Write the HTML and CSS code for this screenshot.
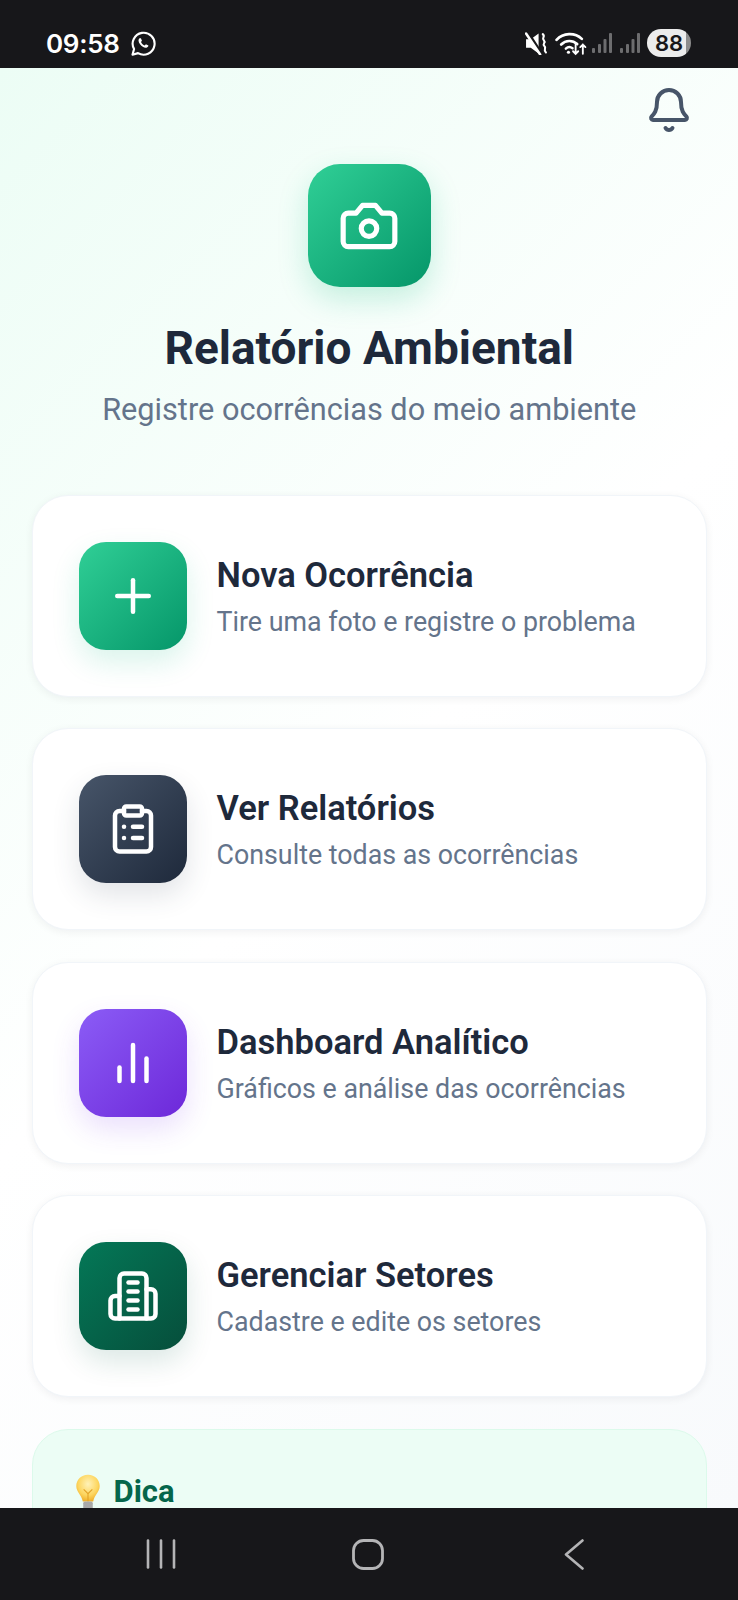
FILE: index.html
```html
<!DOCTYPE html>
<html lang="pt-BR">
<head>
<meta charset="utf-8">
<title>Relatório Ambiental</title>
<link rel="stylesheet" href="styles.css">
</head>
<body>
<div class="phone">
  <div class="status">
    <span class="time">09:58</span>
    <svg class="wa" viewBox="0 0 26 26" fill="none" stroke="#fff" stroke-width="2.2" stroke-linejoin="round" stroke-linecap="round"><path d="M1.6 24.6 3.2 18.8A11.4 11.4 0 1 1 7.3 23z"/><path d="M8.8 7.6c-1.6 1.4-1.2 3.8.6 6.2 2 2.6 4.6 4.1 6.7 3.6 1.2-.3 2-1.2 2-2.2l-2.6-1.3-1.2 1.2c-1.700-.6-3-1.900-3.900-3.700l1-1.200-1.100-2.700z" fill="#fff" stroke="none"/></svg>
    <span class="spacer"></span>
    <svg class="mute" viewBox="0 0 22 22" fill="none"><path d="M1 7h4.500l7.500-5.500v19L5.500 15H1z" fill="#fff"/><path d="M2 0l13 20" stroke="#17171a" stroke-width="3.600"/><path d="M1 1.500l13.500 20" stroke="#fff" stroke-width="2.400" stroke-linecap="round"/><path d="M17 2c3 2.500-1.500 3.500 1 6s-2 3 .500 5.500-1.500 3 1.500 6" stroke="#fff" stroke-width="2" stroke-linecap="round"/></svg>
    <svg class="wifi" viewBox="0 0 32 24" fill="none" stroke="#fff" stroke-linecap="round"><path d="M1.500 8.500C8 1.500 19 1 26 7.500" stroke-width="2.600"/><path d="M6 13c4.500-4.500 11-4.500 15.500-.5" stroke-width="2.600"/><path d="M10.500 17c2-2 4.500-2 6.500-.5" stroke-width="2.400"/><path d="M13 20.500h.1" stroke-width="3"/><path d="M20 13v9m-2.500-2.500L20 22l2.500-2.500" stroke-width="1.800"/><path d="M27 22v-9m-2.500 2.500L27 13l2.500 2.500" stroke-width="1.800"/></svg>
    <svg class="sig sig-first" viewBox="0 0 20 20" fill="#6d6d6f"><rect x="0" y="15" width="3" height="5" rx="1"/><rect x="6" y="11" width="3" height="9" rx="1"/><rect x="11.500" y="6" width="3" height="14" rx="1"/><rect x="17" y="0" width="3" height="20" rx="1"/></svg>
    <svg class="sig" viewBox="0 0 20 20" fill="#6d6d6f"><rect x="0" y="15" width="3" height="5" rx="1"/><rect x="6" y="11" width="3" height="9" rx="1"/><rect x="11.500" y="6" width="3" height="14" rx="1"/><rect x="17" y="0" width="3" height="20" rx="1"/></svg>
    <span class="batt">88</span>
  </div>

  <main class="content">
    <div class="topbar">
      <svg class="bell" viewBox="0 0 24 24" fill="none" stroke="#475569" stroke-width="2" stroke-linecap="round" stroke-linejoin="round"><path d="M10.268 21a2 2 0 0 0 3.464 0"/><path d="M3.262 15.326A1 1 0 0 0 4 17h16a1 1 0 0 0 .74-1.673C19.410 13.956 18 12.499 18 8A6 6 0 0 0 6 8c0 4.499-1.411 5.956-2.738 7.326"/></svg>
    </div>

    <header class="hero">
      <div class="logo">
        <svg class="logo-ico" viewBox="0 0 24 24" fill="none" stroke="#fff" stroke-width="2" stroke-linecap="round" stroke-linejoin="round"><path d="M14.500 4h-5L7 7H4a2 2 0 0 0-2 2v9a2 2 0 0 0 2 2h16a2 2 0 0 0 2-2V9a2 2 0 0 0-2-2h-3l-2.500-3z"/><circle cx="12" cy="13" r="3"/></svg>
      </div>
      <h1 class="title">Relatório Ambiental</h1>
      <p class="subtitle">Registre ocorrências do meio ambiente</p>
    </header>

    <section class="cards">
      <a class="card">
        <span class="tile tile-green">
          <svg class="ico" viewBox="0 0 24 24" fill="none" stroke="#fff" stroke-width="2" stroke-linecap="round" stroke-linejoin="round"><path d="M5 12h14"/><path d="M12 5v14"/></svg>
        </span>
        <span class="card-text"><span class="card-title">Nova Ocorrência</span><span class="card-sub">Tire uma foto e registre o problema</span></span>
      </a>
      <a class="card">
        <span class="tile tile-slate">
          <svg class="ico" viewBox="0 0 24 24" fill="none" stroke="#fff" stroke-width="2" stroke-linecap="round" stroke-linejoin="round"><rect x="8" y="2" width="8" height="4" rx="1"/><path d="M16 4h2a2 2 0 0 1 2 2v14a2 2 0 0 1-2 2H6a2 2 0 0 1-2-2V6a2 2 0 0 1 2-2h2"/><path d="M12 11h4"/><path d="M12 16h4"/><path d="M8 11h.01"/><path d="M8 16h.01"/></svg>
        </span>
        <span class="card-text"><span class="card-title">Ver Relatórios</span><span class="card-sub">Consulte todas as ocorrências</span></span>
      </a>
      <a class="card">
        <span class="tile tile-violet">
          <svg class="ico" viewBox="0 0 24 24" fill="none" stroke="#fff" stroke-width="2" stroke-linecap="round" stroke-linejoin="round"><path d="M18 20V10"/><path d="M12 20V4"/><path d="M6 20v-6"/></svg>
        </span>
        <span class="card-text"><span class="card-title">Dashboard Analítico</span><span class="card-sub">Gráficos e análise das ocorrências</span></span>
      </a>
      <a class="card">
        <span class="tile tile-forest">
          <svg class="ico" viewBox="0 0 24 24" fill="none" stroke="#fff" stroke-width="2" stroke-linecap="round" stroke-linejoin="round"><path d="M6 22V4a2 2 0 0 1 2-2h8a2 2 0 0 1 2 2v18Z"/><path d="M6 12H4a2 2 0 0 0-2 2v6a2 2 0 0 0 2 2h2"/><path d="M18 9h2a2 2 0 0 1 2 2v9a2 2 0 0 1-2 2h-2"/><path d="M10 6h4"/><path d="M10 10h4"/><path d="M10 14h4"/><path d="M10 18h4"/></svg>
        </span>
        <span class="card-text"><span class="card-title">Gerenciar Setores</span><span class="card-sub">Cadastre e edite os setores</span></span>
      </a>
    </section>

    <aside class="tip">
      <div class="tip-head">
        <svg class="bulb" viewBox="0 0 30 42"><defs><radialGradient id="bg" cx=".5" cy=".35" r=".7"><stop offset="0" stop-color="#fff2b8"/><stop offset=".6" stop-color="#fdd65f"/><stop offset="1" stop-color="#eda61f"/></radialGradient></defs><path d="M15 1C7 1 1.500 7 1.500 14c0 7 6 10 7.500 18h12c1.500-8 7.500-11 7.500-18C28.500 7 23 1 15 1z" fill="url(#bg)"/><path d="M10 18l5 5 5-5M15 23v9" stroke="#e3a327" stroke-width="1.300" fill="none"/><rect x="9.500" y="32" width="11" height="9" rx="2" fill="#a9a9a9"/></svg>
        <span class="tip-title">Dica</span>
      </div>
    </aside>
  </main>

  <nav class="nav">
    <svg class="nav-recent" viewBox="0 0 30 30" fill="none" stroke="#b4b4b6" stroke-width="2.600" stroke-linecap="round"><path d="M2 1.500v27"/><path d="M15 1.500v27"/><path d="M28 1.500v27"/></svg>
    <svg class="nav-home" viewBox="0 0 32 31" fill="none" stroke="#b4b4b6" stroke-width="2.800"><rect x="1.500" y="1.500" width="29" height="28" rx="10"/></svg>
    <svg class="nav-back" viewBox="0 0 20 31" fill="none" stroke="#b4b4b6" stroke-width="2.600" stroke-linecap="round" stroke-linejoin="round"><path d="M18.500 1.500 2 15.500l16.500 14"/></svg>
  </nav>
</div>
</body>
</html>
```
FILE: styles.css
```css
* { box-sizing: border-box; }
html, body { margin: 0; padding: 0; }
body { font-family: Roboto, "Liberation Sans", sans-serif; background: #17171a; }

.phone {
  width: 738px;
  height: 1600px;
  display: flex;
  flex-direction: column;
  overflow: hidden;
}

/* status bar */
.status {
  flex: 0 0 68px;
  background: #17171a;
  display: flex;
  align-items: center;
  padding: 18px 47px 0 46px;
  color: #fff;
}
.time { font-family: Inter, Roboto, sans-serif; font-weight: 600; font-size: 26px; letter-spacing: -0.3px; margin-right: 11px; }
.wa { width: 25px; height: 25px; }
.spacer { flex: 1; }
.mute { width: 23px; height: 23px; margin-right: 7px; }
.wifi { width: 33px; height: 25px; margin-right: 4px; }
.sig { width: 20px; height: 20px; margin-right: 7px; }
.sig-first { margin-right: 8px; }
.batt {
  width: 44px;
  height: 28px;
  border-radius: 14px;
  background: linear-gradient(90deg, #ececec 0 88%, #8d8d8d 88%);
  color: #17171a;
  font-family: Inter, Roboto, sans-serif;
  font-weight: 600;
  font-size: 22px;
  line-height: 28px;
  text-align: center;
}

/* scroll area */
.content {
  flex: 1 1 auto;
  min-height: 0;
  overflow: hidden;
  padding: 0 31px 0 31.5px;
  background: linear-gradient(135deg, #ecfdf5 0%, #ffffff 50%, #f8fafc 100%);
}
.topbar { display: flex; justify-content: flex-end; padding: 18px 14px 0 0; height: 96px; }
.bell { width: 48px; height: 48px; }

.hero { display: flex; flex-direction: column; align-items: center; }
.logo {
  width: 123px;
  height: 123px;
  border-radius: 32px;
  background: linear-gradient(135deg, #30cf96, #059669);
  box-shadow: 0 12px 30px rgba(16, 185, 129, .22);
  display: flex;
  align-items: center;
  justify-content: center;
}
.logo-ico { width: 62px; height: 62px; }
.title {
  margin: 34px 0 0;
  font-size: 46px;
  line-height: 54px;
  font-weight: 700;
  color: #1e293b;
}
.subtitle {
  margin: 16px 0 0;
  font-size: 30.7px;
  line-height: 38px;
  color: #64748b;
}

.cards { margin-top: 66px; display: flex; flex-direction: column; gap: 31.4px; }
.card {
  height: 202px;
  display: flex;
  align-items: center;
  gap: 30px;
  padding: 0 46px;
  background: #fff;
  border: 1px solid #f1f5f9;
  border-radius: 36px;
  box-shadow: 0 2px 8px rgba(15, 23, 42, .06);
}
.tile {
  flex: 0 0 108px;
  height: 108px;
  border-radius: 27px;
  display: flex;
  align-items: center;
  justify-content: center;
}
.tile-green { background: linear-gradient(135deg, #30cf96, #059669); box-shadow: 0 12px 28px rgba(16, 185, 129, .16); }
.tile-slate { background: linear-gradient(135deg, #475569, #1e293b); box-shadow: 0 12px 28px rgba(51, 65, 85, .14); }
.tile-violet { background: linear-gradient(135deg, #8b5cf6, #6d28d9); box-shadow: 0 12px 28px rgba(124, 58, 237, .16); }
.tile-forest { background: linear-gradient(135deg, #047857, #064e3b); box-shadow: 0 12px 28px rgba(6, 95, 70, .14); }
.ico { width: 54px; height: 54px; }
.card-text { display: flex; flex-direction: column; gap: 10px; padding-top: 2px; }
.card-title { font-size: 34.5px; line-height: 40px; font-weight: 600; color: #1e293b; }
.card-sub { font-size: 26.8px; line-height: 34px; color: #64748b; }

.tip {
  margin-top: 32px;
  height: 220px;
  background: #ecfdf5;
  border: 1px solid #dcfaeb;
  border-radius: 36px;
  padding: 43px 42px;
}
.tip-head { display: flex; align-items: center; gap: 13px; }
.bulb { width: 26px; height: 38px; flex: none; }
.tip-title { font-size: 31px; line-height: 30px; font-weight: 700; color: #05664b; }

/* nav bar */
.nav {
  flex: 0 0 92px;
  background: #17171a;
  display: flex;
  align-items: center;
  padding: 0 0 0 146px;
}
.nav-recent { width: 30px; height: 30px; margin-right: 176px; }
.nav-home { width: 32px; height: 31px; margin-right: 180px; }
.nav-back { width: 20px; height: 31px; }
```
